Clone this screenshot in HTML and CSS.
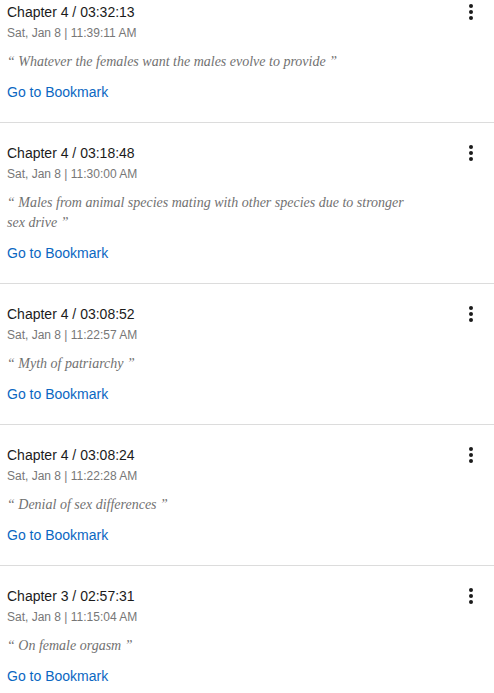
FILE: index.html
```html
<!DOCTYPE html>
<html lang="en">
<head>
<meta charset="utf-8">
<title>Bookmarks</title>
<link rel="stylesheet" href="styles.css">
</head>
<body>
<ul class="bookmarks">
  <li class="bookmark">
    <div class="bookmark-head">
      <div class="bookmark-title">Chapter 4 / 03:32:13</div>
      <button class="more" aria-label="More"><svg viewBox="0 0 24 24" width="24" height="24"><circle cx="12" cy="6" r="2"/><circle cx="12" cy="12" r="2"/><circle cx="12" cy="18" r="2"/></svg></button>
    </div>
    <div class="bookmark-date">Sat, Jan 8 | 11:39:11 AM</div>
    <p class="bookmark-quote">“ Whatever the females want the males evolve to provide ”</p>
    <a class="bookmark-link" href="#">Go to Bookmark</a>
  </li>
  <li class="bookmark">
    <div class="bookmark-head">
      <div class="bookmark-title">Chapter 4 / 03:18:48</div>
      <button class="more" aria-label="More"><svg viewBox="0 0 24 24" width="24" height="24"><circle cx="12" cy="6" r="2"/><circle cx="12" cy="12" r="2"/><circle cx="12" cy="18" r="2"/></svg></button>
    </div>
    <div class="bookmark-date">Sat, Jan 8 | 11:30:00 AM</div>
    <p class="bookmark-quote">“ Males from animal species mating with other species due to stronger sex drive ”</p>
    <a class="bookmark-link" href="#">Go to Bookmark</a>
  </li>
  <li class="bookmark">
    <div class="bookmark-head">
      <div class="bookmark-title">Chapter 4 / 03:08:52</div>
      <button class="more" aria-label="More"><svg viewBox="0 0 24 24" width="24" height="24"><circle cx="12" cy="6" r="2"/><circle cx="12" cy="12" r="2"/><circle cx="12" cy="18" r="2"/></svg></button>
    </div>
    <div class="bookmark-date">Sat, Jan 8 | 11:22:57 AM</div>
    <p class="bookmark-quote">“ Myth of patriarchy ”</p>
    <a class="bookmark-link" href="#">Go to Bookmark</a>
  </li>
  <li class="bookmark">
    <div class="bookmark-head">
      <div class="bookmark-title">Chapter 4 / 03:08:24</div>
      <button class="more" aria-label="More"><svg viewBox="0 0 24 24" width="24" height="24"><circle cx="12" cy="6" r="2"/><circle cx="12" cy="12" r="2"/><circle cx="12" cy="18" r="2"/></svg></button>
    </div>
    <div class="bookmark-date">Sat, Jan 8 | 11:22:28 AM</div>
    <p class="bookmark-quote">“ Denial of sex differences ”</p>
    <a class="bookmark-link" href="#">Go to Bookmark</a>
  </li>
  <li class="bookmark">
    <div class="bookmark-head">
      <div class="bookmark-title">Chapter 3 / 02:57:31</div>
      <button class="more" aria-label="More"><svg viewBox="0 0 24 24" width="24" height="24"><circle cx="12" cy="6" r="2"/><circle cx="12" cy="12" r="2"/><circle cx="12" cy="18" r="2"/></svg></button>
    </div>
    <div class="bookmark-date">Sat, Jan 8 | 11:15:04 AM</div>
    <p class="bookmark-quote">“ On female orgasm ”</p>
    <a class="bookmark-link" href="#">Go to Bookmark</a>
  </li>
</ul>
</body>
</html>
```
FILE: styles.css
```css
html, body {
  margin: 0;
  padding: 0;
  background: #ffffff;
}

body {
  font-family: "Liberation Sans", Arial, sans-serif;
  overflow: hidden;
}

.bookmarks {
  list-style: none;
  margin: -18px 0 0 0;
  padding: 0;
}

.bookmark {
  display: flex;
  flex-direction: column;
  align-items: flex-start;
  padding: 20px 11px 20px 7px;
  border-bottom: 1px solid #dcdcdc;
}

.bookmark-head {
  display: flex;
  align-items: center;
  justify-content: space-between;
  align-self: stretch;
  height: 20px;
}

.bookmark-title {
  font-size: 14px;
  line-height: 20px;
  color: #1b1b1b;
}

.more {
  display: block;
  width: 24px;
  height: 24px;
  margin: -2px 0;
  padding: 0;
  border: 0;
  background: none;
  fill: #1b1b1b;
}

.more svg {
  display: block;
}

.bookmark-date {
  margin-top: 3px;
  font-size: 12px;
  line-height: 16px;
  color: #777777;
}

.bookmark-quote {
  margin: 11px 0 0 0;
  max-width: 400px;
  font-family: "Liberation Serif", "Times New Roman", serif;
  font-style: italic;
  font-size: 14px;
  line-height: 20px;
  color: #717171;
}

.bookmark-link {
  margin-top: 10px;
  font-size: 14px;
  line-height: 20px;
  color: #0b67c2;
  text-decoration: none;
}
```
